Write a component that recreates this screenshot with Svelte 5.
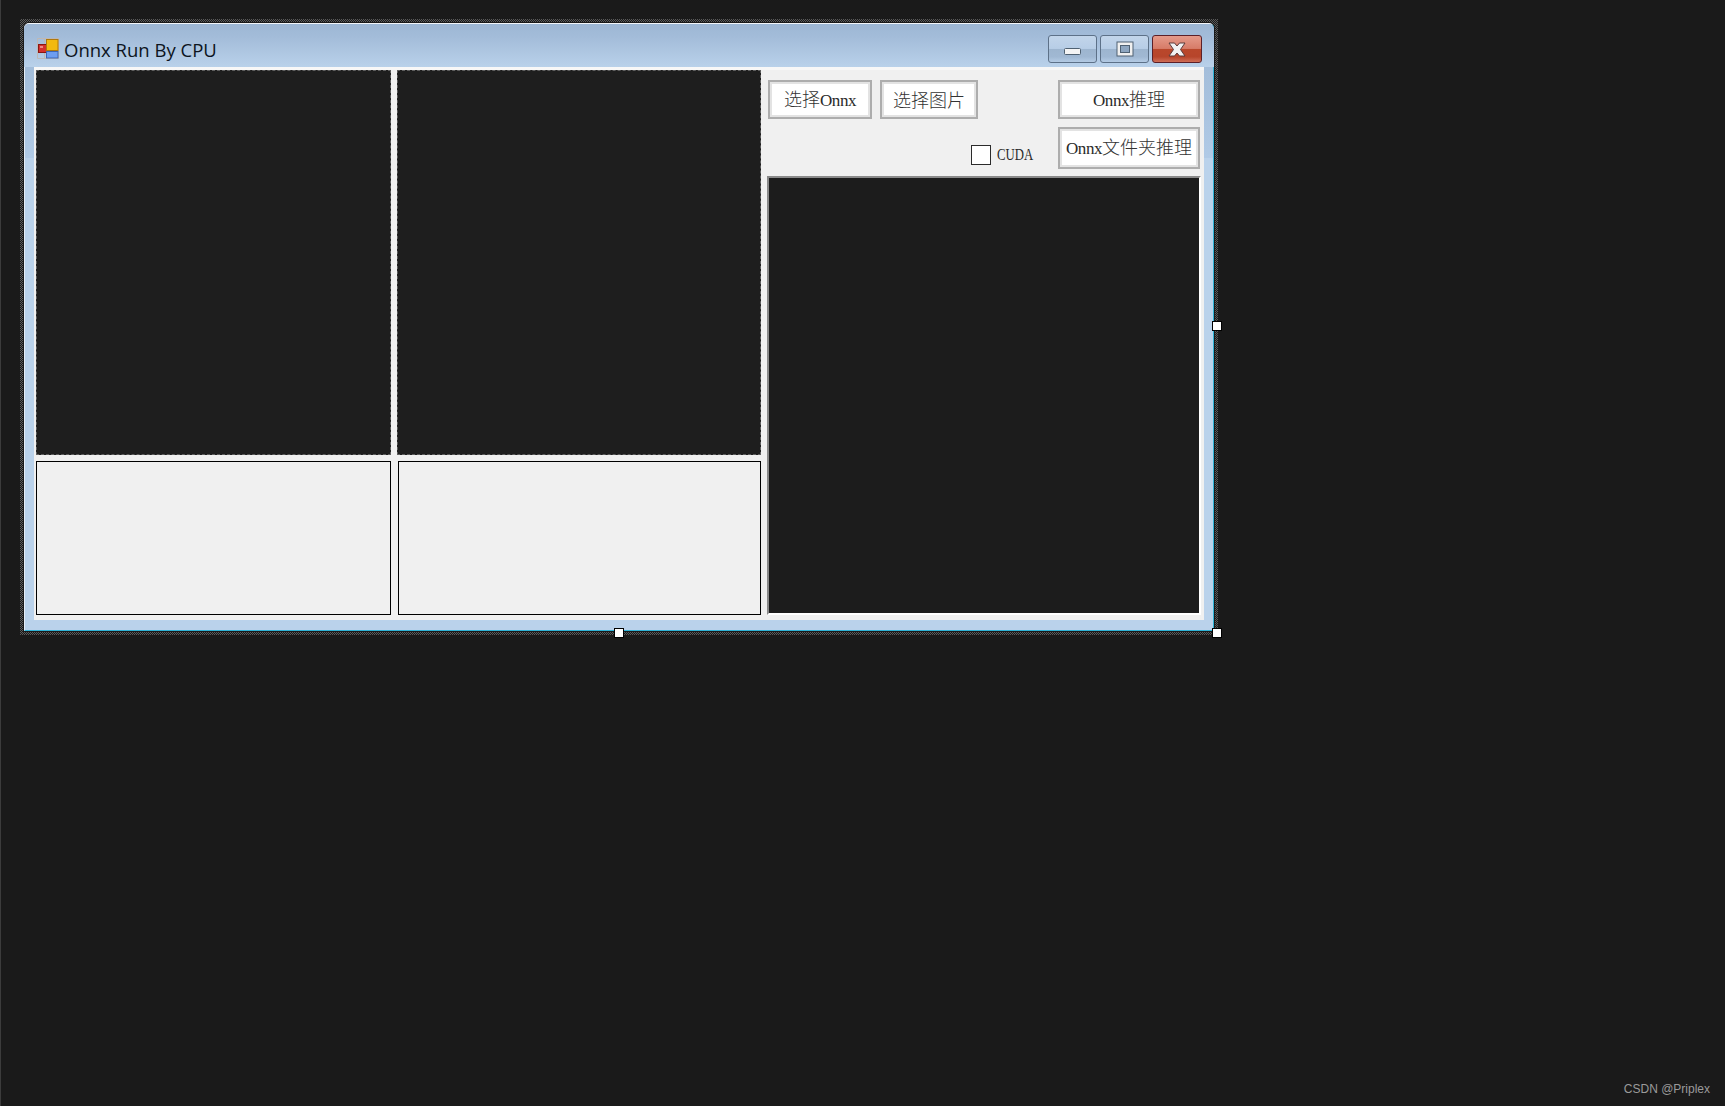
<script>
  let cuda = $state(false);
</script>

<div class="page">
  <div class="selection">
    <div class="window">
      <div class="titlebar">
        <svg class="app-icon" width="22" height="22" viewBox="0 0 22 22">
          <path d="M0.5 0.5H21.5V20.5H0.5ZM7.5 0.5V20.5M0.5 14.5H21.5" fill="none" stroke="#bfb8b4" stroke-width="1" />
          <rect x="1.5" y="6.5" width="8" height="8" fill="#d4302b" stroke="#8a1512" />
          <rect x="3" y="8" width="3" height="2" fill="#ee8a80" />
          <rect x="9.5" y="1.5" width="11.5" height="11" fill="#f2b90f" stroke="#b0780a" />
          <rect x="9.5" y="13.5" width="11.5" height="6.5" fill="#6d9df0" stroke="#3c66b5" />
        </svg>
        <span class="title">Onnx Run By CPU</span>
        <div class="caption">
          <button class="cap" aria-label="minimize">
            <svg class="min-icon" width="17" height="7" viewBox="0 0 17 7"><rect x="0.5" y="0.5" width="16" height="6" rx="1" fill="#f4f4f4" stroke="#4f6172" /></svg>
          </button>
          <button class="cap" aria-label="maximize">
            <svg width="18" height="16" viewBox="0 0 18 16"><rect x="1" y="1" width="16" height="14" fill="#f0f0f0" stroke="#4f6172" /><rect x="4.5" y="4.5" width="9" height="7" fill="#8ea6c0" stroke="#4f6172" /></svg>
          </button>
          <button class="cap close" aria-label="close">
            <svg width="18" height="15" viewBox="0 0 18 15"><path d="M1 1H6.5L9 4L11.5 1H17L12.5 7.5L17 14H11.5L9 11L6.5 14H1L5.5 7.5Z" fill="#f2f2f2" stroke="#5a3a3a" /></svg>
          </button>
        </div>
      </div>

      <div class="client">
        <div class="pic"></div>
        <div class="pic"></div>
        <div class="side">
          <div class="tools">
            <div class="tools-left">
              <div class="btn-row">
                <button class="btn first"><span>选择</span><span class="lat">Onnx</span></button>
                <button class="btn second">选择图片</button>
              </div>
              <label class="check">
                <input type="checkbox" bind:checked={cuda} />
                <span class="lat cuda">CUDA</span>
              </label>
            </div>
            <div class="tools-right">
              <button class="btn run"><span class="lat">Onnx</span><span>推理</span></button>
              <button class="btn run tall"><span class="lat">Onnx</span><span>文件夹推理</span></button>
            </div>
          </div>
          <div class="result"></div>
        </div>
        <div class="log"></div>
        <div class="log second-log"></div>
      </div>
    </div>

    <span class="handle h-right"></span>
    <span class="handle h-bottom"></span>
    <span class="handle h-corner"></span>
  </div>

  <span class="watermark">CSDN @Priplex</span>
</div>

<style>
  :global(body) {
    margin: 0;
    background: #1a1a1a;
  }

  .page {
    position: relative;
    height: 1106px;
    box-sizing: border-box;
    padding: 19px 0 0 19px;
    border-left: 1px solid #3c3c3c;
    overflow: hidden;
  }

  /* designer selection frame */
  .selection {
    position: relative;
    width: 1190px;
    padding: 4px;
    background: repeating-conic-gradient(#5a5a5a 0 25%, #1a1a1a 0 50%) 0 0 / 2px 2px;
  }

  .window {
    box-sizing: border-box;
    height: 608px;
    border-radius: 5px 5px 0 0;
    border-top: 1px solid #f4f7fa;
    border-left: 1px solid #e6eef7;
    border-right: 1px solid #2fb3d6;
    border-bottom: 1px solid #2fb3d6;
    background: linear-gradient(#9db7d4, #b0cae6 134px, #bad2eb 134px);
    box-shadow: 0 0 0 1px #1a1a1a;
  }

  .titlebar {
    display: flex;
    align-items: center;
    height: 43px;
    margin-left: -1px;
    margin-right: -1px;
    padding: 0 12px 0 13px;
    border-radius: 5px 5px 0 0;
    background: linear-gradient(#9db7d4, #a3bcd9 30%, #b9d1ea);
  }

  .app-icon {
    margin-top: 7px;
  }

  .title {
    margin-left: 5px;
    margin-top: 7px;
    font-family: "Open Sans", sans-serif;
    font-size: 18.5px;
    color: #0c1420;
  }

  .caption {
    display: flex;
    gap: 3px;
    margin-left: auto;
    margin-top: 7px;
  }

  .cap {
    display: flex;
    align-items: center;
    justify-content: center;
    width: 49px;
    height: 28px;
    padding: 0;
    border: 1px solid #5d7188;
    border-radius: 3px;
    background: linear-gradient(#c2d5ea 0, #b7cde6 48%, #9db5cf 50%, #a0b8d3 80%, #b4cbe4 100%);
  }

  .min-icon {
    margin-top: 4px;
  }

  .close {
    width: 50px;
    border-color: #5c2028;
    background: linear-gradient(#e59a8a 0, #d77c68 48%, #b9472b 50%, #b7452b 80%, #cf6e57 100%);
  }

  .client {
    display: grid;
    grid-template-columns: 355px 364px 434px;
    grid-template-rows: 385px 154px;
    column-gap: 6px;
    row-gap: 6px;
    box-sizing: border-box;
    width: 1170px;
    height: 553px;
    margin-left: 9px;
    padding: 3px 3px 5px 2px;
    background: #f0f0f0;
    box-shadow: inset 0 3px 0 #f7f7f7;
  }

  .pic {
    box-sizing: border-box;
    background: #1e1e1e;
    border: 1px dashed #5e5e5e;
  }

  .log {
    box-sizing: border-box;
    background: #f0f0f0;
    border: 1px solid #000;
  }

  .second-log {
    margin-left: 1px;
  }

  .side {
    grid-column: 3;
    grid-row: 1 / 3;
    display: flex;
    flex-direction: column;
  }

  .tools {
    display: flex;
    box-sizing: border-box;
    height: 106px;
    padding: 10px 0 0 1px;
  }

  .tools-left {
    width: 290px;
  }

  .btn-row {
    display: flex;
    gap: 8px;
  }

  .tools-right {
    display: flex;
    flex-direction: column;
    gap: 8px;
    width: 142px;
  }

  .btn {
    box-sizing: border-box;
    height: 39px;
    padding: 0 0 2px;
    border: 2px solid #adadad;
    box-shadow: inset 0 0 0 2px #e3e3e3;
    background: #fff;
    color: #333;
    font-family: "Noto Sans CJK SC", sans-serif;
    font-size: 18px;
    font-weight: 300;
    line-height: 1;
  }

  .first {
    width: 104px;
  }

  .second {
    width: 98px;
  }

  .run {
    width: 142px;
  }

  .tall {
    height: 42px;
  }

  .lat {
    font-family: "Liberation Serif", serif;
    font-size: 17px;
    font-weight: 400;
    letter-spacing: -0.4px;
    color: #2a2a2a;
  }

  .check {
    display: flex;
    align-items: center;
    gap: 6px;
    margin: 26px 0 0 203px;
  }

  .check input {
    appearance: none;
    box-sizing: border-box;
    width: 20px;
    height: 20px;
    margin: 0;
    background: #fff;
    border: 1px solid #2b2b2b;
  }

  /* the serif is wider than the original's half-width latin */
  .cuda {
    letter-spacing: 0;
    transform: scaleX(0.75);
    transform-origin: left center;
  }

  .result {
    box-sizing: border-box;
    height: 439px;
    background: #1c1c1c;
    border-style: solid;
    border-width: 2px;
    border-color: #8a8a8a #ffffff #ffffff #8a8a8a;
  }

  .handle {
    position: absolute;
    box-sizing: border-box;
    width: 10px;
    height: 10px;
    background: #fff;
    border: 1px solid #000;
  }

  .h-right {
    right: -4px;
    top: 302px;
  }

  .h-bottom {
    left: 594px;
    bottom: -3px;
  }

  .h-corner {
    right: -4px;
    bottom: -3px;
  }

  .watermark {
    position: absolute;
    right: 15px;
    bottom: 10px;
    font-family: "Liberation Sans", sans-serif;
    font-size: 12px;
    color: #9a9a9a;
  }
</style>
